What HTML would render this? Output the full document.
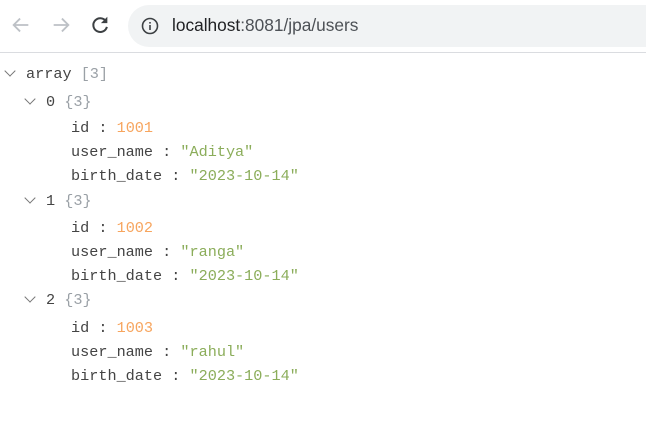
<!DOCTYPE html>
<html><head><meta charset="utf-8"><style>
body{margin:0;width:646px;height:445px;background:#fff;overflow:hidden;position:relative;font-family:"Liberation Sans",sans-serif}
.bar{position:absolute;left:0;top:0;width:646px;height:52px;background:#fff;border-bottom:1px solid #dadce0}
.url{position:absolute;left:128px;top:5px;width:540px;height:42px;border-radius:21px;background:#f1f3f4}
.url span.t{position:absolute;left:44px;top:10px;font-size:17.3px;color:#202124}
.url span.g{color:#4d5156}
.l{position:absolute;font-family:"Liberation Mono",monospace;font-size:15.2px;color:#444;white-space:pre;line-height:18px}
.n{color:#f7a55e}.s{color:#8bad5a}.b{color:#9aa0a6}
.c{position:absolute;width:7px;height:7px;border-right:1.3px solid #777;border-bottom:1.3px solid #777;transform:rotate(45deg)}
</style></head><body>
<div class="bar">
<svg style="position:absolute;left:10px;top:14px" width="22" height="22" viewBox="0 0 24 24"><path d="M20 12H5M11 5l-7 7 7 7" fill="none" stroke="#bdc1c6" stroke-width="2"/></svg>
<svg style="position:absolute;left:50px;top:14px" width="22" height="22" viewBox="0 0 24 24"><path d="M4 12h15M13 5l7 7-7 7" fill="none" stroke="#bdc1c6" stroke-width="2"/></svg>
<svg style="position:absolute;left:89px;top:14px" width="22" height="22" viewBox="0 0 24 24"><path d="M18.5 8A7.5 7.5 0 1 0 19.5 14" fill="none" stroke="#3c4043" stroke-width="2.2"/><path d="M20 3v7h-7z" fill="#3c4043"/></svg>
<div class="url">
<svg style="position:absolute;left:13px;top:12px" width="18" height="18" viewBox="0 0 18 18"><circle cx="9" cy="9" r="7.5" fill="none" stroke="#3c4043" stroke-width="1.6"/><rect x="8.2" y="8" width="1.6" height="5" fill="#3c4043"/><rect x="8.2" y="5" width="1.6" height="1.6" fill="#3c4043"/></svg>
<span class="t">localhost<span class="g">:8081/jpa/users</span></span>
</div>
</div>

<div class="c" style="left:6px;top:67px"></div><div class="l" style="left:26px;top:65px">array <span class="b">[3]</span></div>

<div class="c" style="left:26px;top:95px"></div><div class="l" style="left:46px;top:93px">0 <span class="b">{3}</span></div>
<div class="l" style="left:71px;top:119px">id : <span class="n">1001</span></div>
<div class="l" style="left:71px;top:143px">user_name : <span class="s">"Aditya"</span></div>
<div class="l" style="left:71px;top:167px">birth_date : <span class="s">"2023-10-14"</span></div>

<div class="c" style="left:26px;top:194px"></div><div class="l" style="left:46px;top:192px">1 <span class="b">{3}</span></div>
<div class="l" style="left:71px;top:219px">id : <span class="n">1002</span></div>
<div class="l" style="left:71px;top:243px">user_name : <span class="s">"ranga"</span></div>
<div class="l" style="left:71px;top:267px">birth_date : <span class="s">"2023-10-14"</span></div>

<div class="c" style="left:26px;top:293px"></div><div class="l" style="left:46px;top:291px">2 <span class="b">{3}</span></div>
<div class="l" style="left:71px;top:319px">id : <span class="n">1003</span></div>
<div class="l" style="left:71px;top:343px">user_name : <span class="s">"rahul"</span></div>
<div class="l" style="left:71px;top:367px">birth_date : <span class="s">"2023-10-14"</span></div>
</body></html>
